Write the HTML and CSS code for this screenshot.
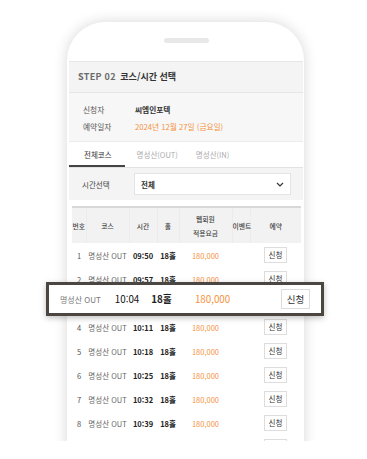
FILE: index.html
```html
<!DOCTYPE html>
<html lang="ko">
<head>
    <meta charset="UTF-8">
    <meta name="viewport" content="width=device-width, initial-scale=1.0">
    <title>코스/시간 선택</title>
    <link rel="stylesheet" href="styles.css">
</head>
<body>

    <div class="stage">
        <div class="phone">
            <div class="speaker"></div>

            <div class="screen">
                <!-- Step title -->
                <div class="step-head">
                    <span class="step-no">STEP 02</span>
                    <span class="step-title">코스/시간 선택</span>
                </div>

                <!-- Applicant info -->
                <div class="info">
                    <div class="info-row">
                        <span class="info-label">신청자</span>
                        <span class="info-value">씨엠인포텍</span>
                    </div>
                    <div class="info-row">
                        <span class="info-label">예약일자</span>
                        <span class="info-value date">2024년 12월 27일 (금요일)</span>
                    </div>
                </div>

                <!-- Course tabs -->
                <ul class="tabs">
                    <li class="tab active">전체코스</li>
                    <li class="tab">명성산(OUT)</li>
                    <li class="tab">명성산(IN)</li>
                </ul>

                <!-- Time filter -->
                <div class="time-select">
                    <span class="time-label">시간선택</span>
                    <div class="select-box">
                        <span>전체</span>
                        <svg class="chevron" width="8" height="5" viewBox="0 0 8 5">
                            <path d="M1 1 L4 4 L7 1" fill="none" stroke="#333" stroke-width="1.2"/>
                        </svg>
                    </div>
                </div>

                <!-- Tee times -->
                <table class="slots">
                    <colgroup>
                        <col class="c-no">
                        <col class="c-course">
                        <col class="c-time">
                        <col class="c-hole">
                        <col class="c-price">
                        <col class="c-event">
                        <col class="c-book">
                    </colgroup>
                    <thead>
                        <tr>
                            <th>번호</th>
                            <th>코스</th>
                            <th>시간</th>
                            <th>홀</th>
                            <th>웹회원<br>적용요금</th>
                            <th>이벤트</th>
                            <th>예약</th>
                        </tr>
                    </thead>
                    <tbody>
                        <tr><td>1</td><td class="course">명성산 OUT</td><td class="time">09:50</td><td class="hole">18홀</td><td class="price">180,000</td><td></td><td><span class="book">신청</span></td></tr>
                        <tr><td>2</td><td class="course">명성산 OUT</td><td class="time">09:57</td><td class="hole">18홀</td><td class="price">180,000</td><td></td><td><span class="book">신청</span></td></tr>
                        <!-- covered by the zoomed row -->
                        <tr class="under-focus"><td>3</td><td class="course">명성산 OUT</td><td class="time">10:04</td><td class="hole">18홀</td><td class="price">180,000</td><td></td><td><span class="book">신청</span></td></tr>
                        <tr><td>4</td><td class="course">명성산 OUT</td><td class="time">10:11</td><td class="hole">18홀</td><td class="price">180,000</td><td></td><td><span class="book">신청</span></td></tr>
                        <tr><td>5</td><td class="course">명성산 OUT</td><td class="time">10:18</td><td class="hole">18홀</td><td class="price">180,000</td><td></td><td><span class="book">신청</span></td></tr>
                        <tr><td>6</td><td class="course">명성산 OUT</td><td class="time">10:25</td><td class="hole">18홀</td><td class="price">180,000</td><td></td><td><span class="book">신청</span></td></tr>
                        <tr><td>7</td><td class="course">명성산 OUT</td><td class="time">10:32</td><td class="hole">18홀</td><td class="price">180,000</td><td></td><td><span class="book">신청</span></td></tr>
                        <tr><td>8</td><td class="course">명성산 OUT</td><td class="time">10:39</td><td class="hole">18홀</td><td class="price">180,000</td><td></td><td><span class="book">신청</span></td></tr>
                        <tr><td>9</td><td class="course">명성산 OUT</td><td class="time">10:46</td><td class="hole">18홀</td><td class="price">180,000</td><td></td><td><span class="book">신청</span></td></tr>
                    </tbody>
                </table>
            </div>
        </div>

        <!-- Zoomed-in row laid over the list -->
        <div class="focus-row">
            <span class="f-course">명성산 OUT</span>
            <span class="f-time">10:04</span>
            <span class="f-hole">18홀</span>
            <span class="f-price">180,000</span>
            <span class="f-book">신청</span>
        </div>

        <div class="bottom-cut"></div>
    </div>

</body>
</html>
```

FILE: styles.css
```css
/* Global reset */
* {
    margin: 0;
    padding: 0;
    box-sizing: border-box;
}

body {
    font-family: 'Noto Sans CJK KR', 'Noto Sans', sans-serif;
    background: #fff;
    color: #333;
}

.stage {
    position: relative;
    width: 367px;
    height: 459px;
    overflow: hidden;
    background: #fff;
}

/* Phone frame */
.phone {
    width: 237px;
    height: 480px;
    margin: 22px 0 0 67px;
    padding: 16px 1px 0 2px;
    background: #fff;
    border-radius: 38px 38px 0 0;
    box-shadow: 0 0 14px rgba(0, 0, 0, 0.16);
}

.speaker {
    width: 45px;
    height: 5px;
    margin: 0 auto 18px;
    border-radius: 3px;
    background: #e8e8e8;
}

.screen {
    background: #fff;
    border-top: 1px solid #e6e6e6;
}

/* Step title */
.step-head {
    height: 31px;
    padding-left: 9px;
    line-height: 30px;
    font-size: 9px;
    font-weight: 700;
    background: #f4f4f4;
    border-bottom: 1px solid #e6e6e6;
}

.step-no {
    color: #6a6a6a;
    letter-spacing: 0.3px;
    margin-right: 2px;
}

.step-title {
    color: #333;
}

/* Applicant info */
.info {
    height: 49px;
    padding: 8px 0 0 14px;
    background: #f7f7f7;
    border-bottom: 1px solid #ececec;
    font-size: 7.7px;
}

.info-row {
    display: flex;
    height: 17px;
    line-height: 17px;
}

.info-label {
    width: 52px;
    color: #555;
}

.info-value {
    color: #333;
    font-weight: 700;
}

.info-value.date {
    color: #f5923e;
    font-weight: 400;
}

/* Tabs */
.tabs {
    display: flex;
    list-style: none;
    height: 26px;
    background: #fff;
    border-bottom: 1px solid #e2e2e2;
    font-size: 7.5px;
}

.tab {
    padding: 0 9px;
    line-height: 25px;
    color: #aaa;
}

.tab:first-child {
    padding: 0 13px 0 15px;
}

.tab:nth-child(2) {
    padding-left: 12px;
}

.tab.active {
    color: #333;
    border-bottom: 2px solid #444;
}

/* Time filter */
.time-select {
    display: flex;
    align-items: center;
    height: 32px;
    padding-left: 13px;
    background: #f4f4f4;
    font-size: 7.5px;
}

.time-label {
    width: 52px;
    color: #444;
}

.select-box {
    display: flex;
    align-items: center;
    justify-content: space-between;
    width: 157px;
    height: 22px;
    padding: 0 6px 0 6px;
    background: #fff;
    border: 1px solid #e4e4e4;
    font-weight: 700;
    color: #333;
}

/* Tee time table */
.slots {
    width: 229px;
    margin: 6px 0 0 3px;
    border-collapse: collapse;
    table-layout: fixed;
    font-size: 7.5px;
    text-align: center;
}

.c-no { width: 14px; }
.c-course { width: 43px; }
.c-time { width: 28px; }
.c-hole { width: 22px; }
.c-price { width: 53px; }
.c-event { width: 18px; }
.c-book { width: 51px; }

.slots thead tr {
    height: 36px;
    background: #f2f2f2;
    border-top: 2px solid #d8d8d8;
}

.slots th {
    font-size: 6.8px;
    font-weight: 500;
    color: #444;
    line-height: 14px;
    white-space: nowrap;
    border-left: 1px solid #ececec;
}

.slots th:first-child {
    border-left: none;
}

.slots tbody tr {
    height: 24px;
}

.slots tr.under-focus {
    visibility: hidden;
}

.slots td {
    color: #555;
    white-space: nowrap;
}

.slots .course {
    color: #666;
}

.slots .time,
.slots .hole {
    color: #222;
    font-weight: 700;
}

.slots .price {
    color: #f5923e;
}

.book {
    display: inline-block;
    width: 23px;
    height: 16px;
    line-height: 14px;
    border: 1px solid #ddd;
    background: #fff;
    color: #333;
}

/* Highlighted row */
.focus-row {
    position: absolute;
    left: 46px;
    top: 282px;
    width: 278px;
    height: 34px;
    display: flex;
    align-items: center;
    background: #fff;
    border: 3px solid #4b4642;
    box-shadow: 0 2px 6px rgba(0, 0, 0, 0.25);
    white-space: nowrap;
}

.f-course {
    margin-left: 11px;
    font-size: 8px;
    color: #777;
}

.f-time {
    margin-left: 14px;
    font-size: 9.8px;
    color: #111;
}

.f-hole {
    margin-left: 12px;
    font-size: 9.8px;
    font-weight: 700;
    color: #222;
}

.f-price {
    margin-left: 23px;
    font-size: 9.8px;
    color: #f5923e;
}

.f-book {
    margin: 0 11px 0 auto;
    width: 29px;
    height: 20px;
    line-height: 18px;
    text-align: center;
    font-size: 9.5px;
    color: #333;
    border: 1px solid #ddd;
}

.bottom-cut {
    position: absolute;
    left: 0;
    top: 441px;
    width: 100%;
    height: 18px;
    background: #fff;
}
```
